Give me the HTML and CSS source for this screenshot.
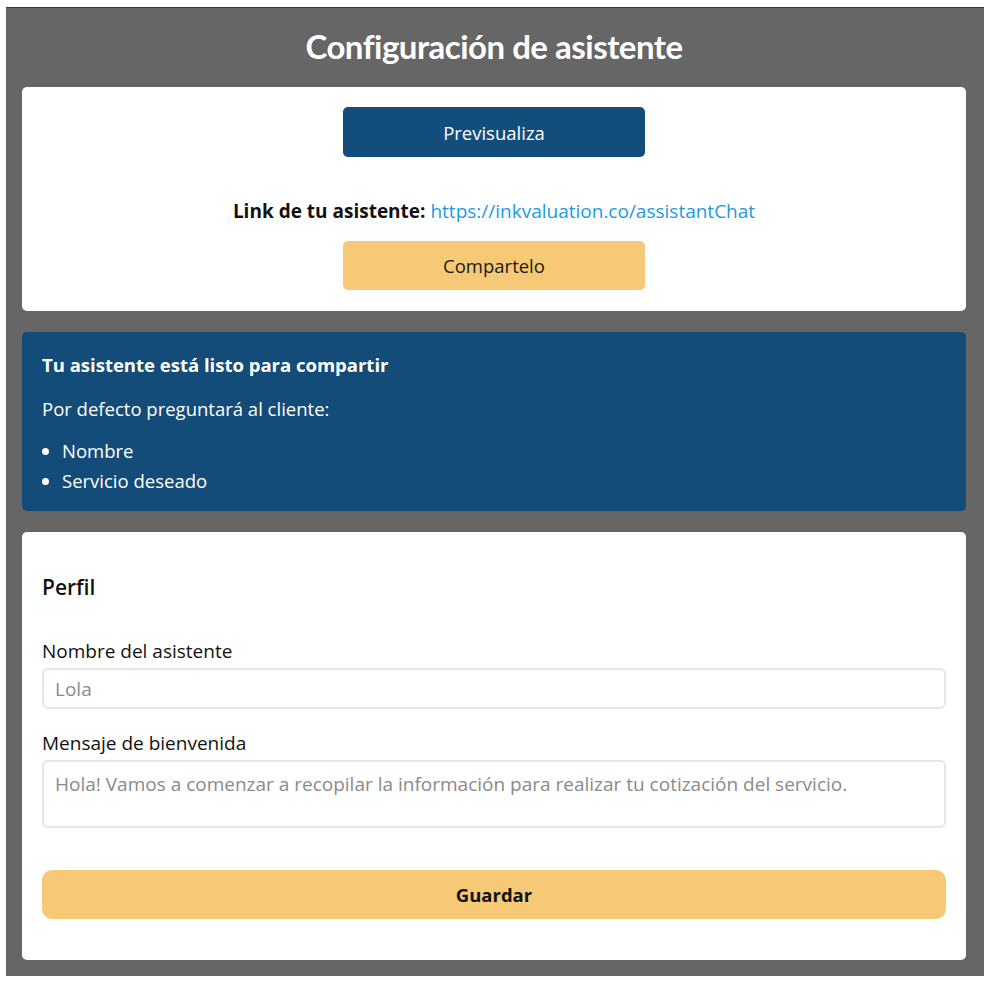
FILE: index.html
```html
<!DOCTYPE html>
<html lang="es">
<head>
<meta charset="utf-8">
<title>Configuración de asistente</title>
<link rel="stylesheet" href="styles.css">
</head>
<body>
<div class="page">
  <h1 class="page-title">Configuración de asistente</h1>

  <section class="card card-share">
    <button class="btn btn-primary">Previsualiza</button>
    <p class="link-line"><strong>Link de tu asistente:</strong> <a href="#">https://inkvaluation.co/assistantChat</a></p>
    <button class="btn btn-accent">Compartelo</button>
  </section>

  <section class="card card-info">
    <h2 class="info-title">Tu asistente está listo para compartir</h2>
    <p class="info-text">Por defecto preguntará al cliente:</p>
    <ul class="info-list">
      <li>Nombre</li>
      <li>Servicio deseado</li>
    </ul>
  </section>

  <section class="card card-form">
    <h3 class="form-title">Perfil</h3>
    <label class="field-label" for="nombre">Nombre del asistente</label>
    <input class="field-input" id="nombre" type="text" placeholder="Lola">
    <label class="field-label" for="mensaje">Mensaje de bienvenida</label>
    <textarea class="field-textarea" id="mensaje" placeholder="Hola! Vamos a comenzar a recopilar la información para realizar tu cotización del servicio."></textarea>
    <button class="btn btn-save">Guardar</button>
  </section>
</div>
</body>
</html>
```

FILE: styles.css
```css
* { box-sizing: border-box; }

html, body {
  margin: 0;
  padding: 0;
  background: #ffffff;
}

body {
  font-family: "Open Sans", "Noto Sans", sans-serif;
  color: #111;
}

.page {
  margin: 7px 7px 7px 6px;
  background: #666666;
  border-top: 1px solid #3a3a3a;
  padding: 0 18px 16px 16px;
  display: flex;
  flex-direction: column;
  gap: 21px;
  min-height: 969px;
}

.page-title {
  margin: 0;
  height: 58px;
  display: flex;
  align-items: center;
  justify-content: center;
  font-family: "Lato", sans-serif;
  font-weight: 700;
  font-size: 33px;
  color: #ffffff;
  letter-spacing: -0.5px;
  padding-top: 18px;
}

.card {
  background: #ffffff;
  border-radius: 5px;
}

.card-share {
  padding: 20px 20px 21px;
  display: flex;
  flex-direction: column;
  align-items: center;
}

.btn {
  border: none;
  font-family: "Open Sans", "Noto Sans", sans-serif;
  font-size: 18.5px;
  cursor: pointer;
}

.btn-primary {
  width: 302px;
  height: 50px;
  background: #124d7b;
  color: #ffffff;
  border-radius: 5px;
}

.btn-accent {
  width: 302px;
  height: 49px;
  background: #f5c976;
  color: #1a1a1a;
  border-radius: 5px;
}

.link-line {
  margin: 41px 0 17px;
  font-size: 19px;
  line-height: 26px;
  color: #111;
}

.link-line strong { font-weight: 700; }

.link-line a {
  color: #1c9ae6;
  text-decoration: none;
}

.card-info {
  background: #134c78;
  color: #ffffff;
  padding: 20px 20px 15px;
}

.info-title {
  margin: 0;
  font-size: 18.5px;
  font-weight: 700;
  line-height: 26px;
}

.info-text {
  margin: 18px 0 0;
  font-size: 18.5px;
  line-height: 26px;
}

.info-list {
  margin: 14px 0 0;
  padding-left: 20px;
  font-size: 18.5px;
  line-height: 30px;
}

.card-form {
  padding: 41px 20px 41px;
  display: flex;
  flex-direction: column;
}

.form-title {
  margin: 0 0 37px;
  font-size: 21px;
  font-weight: 600;
  line-height: 28px;
}

.field-label {
  font-size: 19px;
  line-height: 26px;
  margin-bottom: 4px;
}

.field-input,
.field-textarea {
  width: 100%;
  border: 2px solid #e6e6e6;
  border-radius: 6px;
  font-family: "Open Sans", "Noto Sans", sans-serif;
  font-size: 19px;
  padding: 6px 11px;
  color: #333;
  background: #fff;
}

.field-input {
  height: 41px;
  margin-bottom: 21px;
}

.field-textarea {
  height: 68px;
  resize: none;
  margin-bottom: 42px;
  line-height: 26px;
  padding-top: 9px;
}

.field-input::placeholder,
.field-textarea::placeholder {
  color: #8a8a8a;
}

.btn-save {
  width: 100%;
  height: 49px;
  background: #f5c976;
  color: #111;
  font-weight: 700;
  border-radius: 10px;
}
```
